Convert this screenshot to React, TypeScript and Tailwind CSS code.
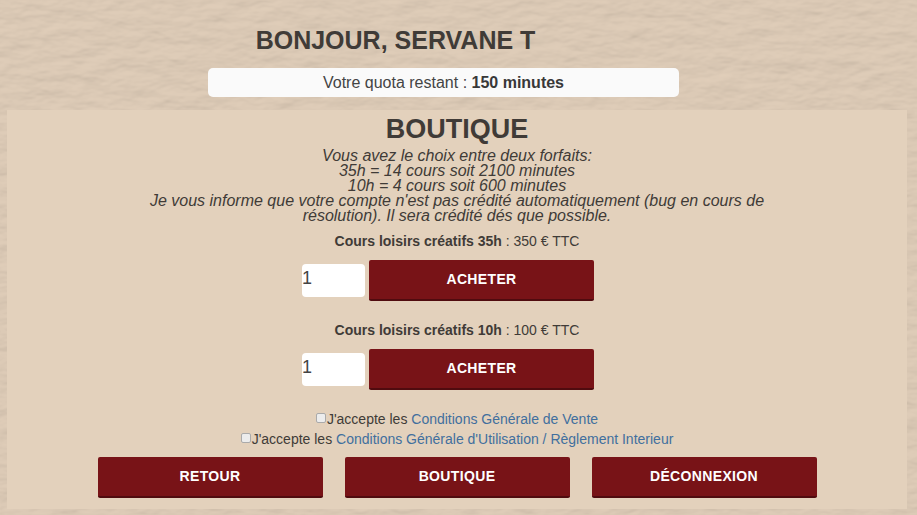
import React, { useId } from 'react';

const buttonClass =
  'h-[41px] w-[225px] rounded-[2px] border-b-2 border-[#500b0f] bg-[#781317] pb-0.5 text-[14px] leading-5 font-bold tracking-wide text-white uppercase';

function LeatherBackground() {
  return (
    <svg className="absolute inset-0 -z-10 h-full w-full" aria-hidden="true">
      <filter id="leather" x="0" y="0" width="100%" height="100%" colorInterpolationFilters="sRGB">
        <feTurbulence type="fractalNoise" baseFrequency="0.035 0.075" numOctaves={3} seed={8} result="grain" />
        <feDiffuseLighting in="grain" surfaceScale={1} diffuseConstant={1.03} lightingColor="#dccab6">
          <feDistantLight azimuth={250} elevation={74} />
        </feDiffuseLighting>
        <feGaussianBlur stdDeviation="0.5" />
      </filter>
      <rect width="100%" height="100%" filter="url(#leather)" opacity="0.7" />
    </svg>
  );
}

function Product({ name, price }: { name: string; price: string }) {
  const id = useId();
  return (
    <form className="flex flex-col items-center" onSubmit={(e) => e.preventDefault()}>
      <label htmlFor={id} className="mb-[9px] leading-5">
        <strong>{name}</strong> : {price}
      </label>
      <div className="mr-[18px] flex items-center gap-1">
        <input
          id={id}
          type="number"
          defaultValue={1}
          min={1}
          className="h-[33px] w-[63px] rounded-[4px] bg-white pr-1 pb-1 pl-0 text-[18px] text-[#444] [appearance:textfield]"
        />
        <button type="submit" className={buttonClass}>Acheter</button>
      </div>
    </form>
  );
}

function Consent({ label }: { label: string }) {
  const id = useId();
  return (
    <div className="flex h-5 items-center justify-center leading-5">
      <input
        id={id}
        type="checkbox"
        className="mr-px mb-[3px] h-[10px] w-[10px] appearance-none rounded-[2px] border border-[#aaa] bg-[#ececec] checked:bg-[#337ab7]"
      />
      <label htmlFor={id}>
        J'accepte les <a href="#" className="text-[#416f9e]">{label}</a>
      </label>
    </div>
  );
}

export default function App() {
  return (
    <div className="relative isolate min-h-screen bg-[#dccab6] pr-[10px] pb-[6px] pl-[7px] font-['Liberation_Sans',Arial,sans-serif] text-[14px] text-[#403b37]">
      <LeatherBackground />
      <header className="flex flex-col items-center pt-[25px] pr-[27px] pb-[13px]">
        <h1 className="mr-24 mb-[13px] text-[25px] leading-[30px] font-bold">BONJOUR, SERVANE T</h1>
        <p className="w-full max-w-[471px] rounded-[5px] bg-[#fafafa] text-center text-[16px] leading-[29px] text-[#444]">
          Votre quota restant : <strong className="text-[#383838]">150 minutes</strong>
        </p>
      </header>
      <main className="flex flex-col items-center bg-[#e3d1bc] pt-1 pb-[11px]">
        <h2 className="mb-1 text-[27px] leading-[30px] font-bold">BOUTIQUE</h2>
        <p className="mb-2 max-w-[660px] text-center text-[16px] leading-[15px] italic">
          Vous avez le choix entre deux forfaits:
          <br />
          35h = 14 cours soit 2100 minutes
          <br />
          10h = 4 cours soit 600 minutes
          <br />
          Je vous informe que votre compte n'est pas crédité automatiquement (bug en cours de résolution). Il sera
          crédité dés que possible.
        </p>
        <div className="flex flex-col gap-[19px]">
          <Product name="Cours loisirs créatifs 35h" price="350 € TTC" />
          <Product name="Cours loisirs créatifs 10h" price="100 € TTC" />
        </div>
        <div className="mt-[19px] mb-2">
          <Consent label="Conditions Générale de Vente" />
          <Consent label="Conditions Générale d'Utilisation / Règlement Interieur" />
        </div>
        <nav className="flex flex-wrap justify-center gap-[22px]">
          <button type="button" className={buttonClass}>Retour</button>
          <button type="button" className={buttonClass}>Boutique</button>
          <button type="button" className={buttonClass}>Déconnexion</button>
        </nav>
      </main>
    </div>
  );
}
